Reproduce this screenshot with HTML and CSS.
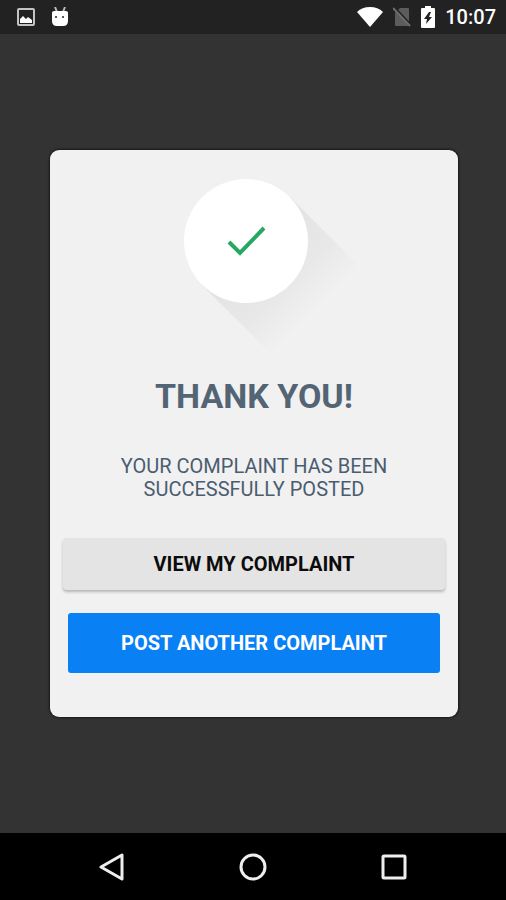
FILE: index.html
```html
<!DOCTYPE html>
<html lang="en">
<head>
    <meta charset="UTF-8">
    <meta name="viewport" content="width=device-width, initial-scale=1.0">
    <title>Thank you</title>
    <link rel="stylesheet" href="styles.css">
</head>
<body>
    <header class="status-bar">
        <div class="status-group notifications">
            <svg width="18" height="18" viewBox="0 0 18 18" aria-hidden="true">
                <rect x="1" y="1" width="16" height="16" rx="1" fill="none" stroke="#c4c4c4" stroke-width="2"/>
                <path d="M3 15v-4l3-3 3 3 2-2 4 3v3z" fill="#fff"/>
            </svg>
            <svg width="18" height="20" viewBox="0 0 18 20" aria-hidden="true">
                <path d="M4 0l2 5M14 0l-2 5" stroke="#bbb" stroke-width="2"/>
                <path d="M1 6q0-2 2-2h12q2 0 2 2v8q0 5-5 5H6q-5 0-5-5z" fill="#fff"/>
                <circle cx="5" cy="10" r="1" fill="#222"/>
                <circle cx="12" cy="10" r="1" fill="#222"/>
            </svg>
        </div>
        <div class="status-group">
            <svg class="wifi" width="26" height="20" viewBox="0 0 26 20" aria-hidden="true">
                <path d="M0 5Q5 0 13 0t13 5L13 20z" fill="#fff"/>
            </svg>
            <svg class="no-sim" width="18" height="20" viewBox="0 0 18 20" aria-hidden="true">
                <path d="M7 1h8q1 0 1 1v16q0 1-1 1H3q-1 0-1-1V6z" fill="#5c5c5c"/>
                <path d="M2 1l16 17" stroke="#222" stroke-width="2"/>
                <path d="M0 1l17 18" stroke="#6c6c6c" stroke-width="2"/>
            </svg>
            <svg class="battery" width="14" height="22" viewBox="0 0 14 22" aria-hidden="true">
                <path d="M4 0h6v2h3q1 0 1 1v18q0 1-1 1H1q-1 0-1-1V3q0-1 1-1h3z" fill="#fff"/>
                <path d="M8 6l-5 7h3l-1 5 6-7H8l2-5z" fill="#222"/>
            </svg>
            <span class="clock">10:07</span>
        </div>
    </header>

    <main class="screen">
        <section class="card">
            <svg class="check" width="228" height="176" viewBox="0 0 228 176" aria-hidden="true">
                <defs>
                    <linearGradient id="shadow" gradientUnits="userSpaceOnUse" x1="106" y1="62" x2="176" y2="132">
                        <stop offset="0" stop-color="#e2e2e2"/>
                        <stop offset="0.6" stop-color="#e8e8e8"/>
                        <stop offset="1" stop-color="#f1f1f1"/>
                    </linearGradient>
                </defs>
                <path d="M150 18l70 70-88 88-70-70z" fill="url(#shadow)"/>
                <circle cx="106" cy="62" r="62" fill="#fff"/>
                <path d="M89 63l11 11 24-25" fill="none" stroke="#27a862" stroke-width="4"/>
            </svg>
            <h1>THANK YOU!</h1>
            <p>YOUR COMPLAINT HAS BEEN SUCCESSFULLY POSTED</p>
            <button type="button" class="btn btn-view">VIEW MY COMPLAINT</button>
            <button type="button" class="btn btn-post">POST ANOTHER COMPLAINT</button>
        </section>
    </main>

    <nav class="nav-bar">
        <button type="button" aria-label="Back">
            <svg width="28" height="28" viewBox="0 0 28 28">
                <path d="M24 2v24L3 14z" fill="none" stroke="#eee" stroke-width="3" stroke-linejoin="round"/>
            </svg>
        </button>
        <button type="button" aria-label="Home">
            <svg width="28" height="28" viewBox="0 0 28 28">
                <circle cx="14" cy="14" r="12" fill="none" stroke="#eee" stroke-width="3"/>
            </svg>
        </button>
        <button type="button" aria-label="Recent apps">
            <svg width="28" height="28" viewBox="0 0 28 28">
                <rect x="3" y="3" width="22" height="22" rx="1" fill="none" stroke="#eee" stroke-width="3"/>
            </svg>
        </button>
    </nav>
</body>
</html>
```
FILE: styles.css
```css
body {
    font-family: Roboto, "Liberation Sans", sans-serif;
    background-color: #333;
    display: flex;
    flex-direction: column;
    min-height: 100vh;
    margin: 0;
}
.status-bar {
    display: flex;
    justify-content: space-between;
    align-items: center;
    height: 34px;
    padding: 0 10px 0 17px;
    background-color: #222;
}
.status-group {
    display: flex;
    align-items: center;
    gap: 10px;
}
.notifications {
    gap: 16px;
}
.clock {
    color: #fff;
    font-size: 20px;
    font-weight: 500;
    line-height: 24px;
}
.screen {
    flex: 1;
    display: flex;
    align-items: center;
    padding: 0 48px 0 50px;
}
.card {
    flex: 1;
    display: flex;
    flex-direction: column;
    align-items: center;
    padding: 29px 13px 44px;
    border-radius: 9px;
    background-color: #f1f1f1;
    box-shadow: 0 0 2px 1px #181818;
    text-align: center;
}
h1 {
    margin: 21px 0 0;
    color: #536474;
    font-size: 34px;
    font-weight: 700;
    line-height: 40px;
}
p {
    max-width: 300px;
    margin: 39px 0 37px;
    color: #4a5d70;
    font-size: 20px;
    line-height: 23px;
}
.btn {
    border: none;
    font-family: inherit;
    font-size: 20px;
    font-weight: 700;
    cursor: pointer;
}
.btn-view {
    align-self: stretch;
    height: 52px;
    border-radius: 4px;
    background-color: #e4e4e4;
    box-shadow: 0 2px 3px rgba(0,0,0,0.25);
    color: #0c0c0c;
}
.btn-post {
    align-self: stretch;
    height: 60px;
    margin: 23px 5px 0;
    border-radius: 3px;
    background-color: #0a80f5;
    color: #fff;
}
.nav-bar {
    display: flex;
    justify-content: center;
    align-items: center;
    gap: 113px;
    height: 67px;
    background-color: #000;
}
.nav-bar button {
    padding: 0;
    border: none;
    background: none;
    cursor: pointer;
}
.nav-bar svg {
    display: block;
}
```
